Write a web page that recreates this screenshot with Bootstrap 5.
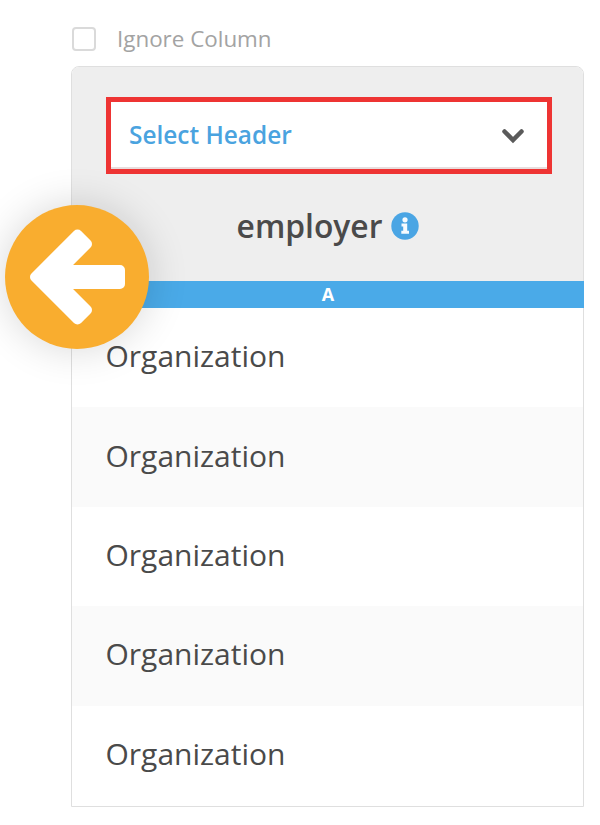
<!DOCTYPE html>
<html lang="en">
<head>
<meta charset="utf-8">
<title>Column mapping</title>
<link href="https://cdn.jsdelivr.net/npm/bootstrap@5.3.0/dist/css/bootstrap.min.css" rel="stylesheet">
<style>
html,body{height:825px;overflow:hidden;background:#fff}
body{font-family:"Open Sans","Liberation Sans",sans-serif;color:#4a4a4a;position:relative}
.page-wrap{padding:26px 16px 0 71px}
.ignore-row{height:26px;gap:21px;margin-bottom:14px;color:#a3a3a3;font-size:22.4px;line-height:26px;padding-left:1px}
.fake-check{width:24px;height:24px;border:2.5px solid #dadada;border-radius:4px;background:#fff;flex:none}
.map-card{border:1px solid #dfdfdf;border-radius:8px 8px 0 0;height:741px}
.map-head{background:#eee;height:214px;padding:30px 31px 0 34px;border-radius:7px 7px 0 0}
.sel-outline{border:5px solid #ee3433;height:77px;background:#fff;box-shadow:inset 0 -2px 0 #e8dddd;padding:0 22px 0 18px;color:#4aa3df;font-size:24.4px;font-weight:600}
.col-title{margin-top:31px;height:42px;gap:9px;font-size:31.8px;font-weight:600;line-height:42px;color:#4a4a4a;padding-right:2px}
.letter-bar{background:#4aaae8;color:#fff;height:27px;line-height:27px;font-size:18px;font-weight:700;text-align:center;margin-right:-1px}
.data-row{height:99.4px;padding-left:33.500px;padding-bottom:4px;font-size:30px;color:#4a4a4a}
.data-row:nth-child(even){background:#fafafa}
.back-circle{position:absolute;left:5px;top:205px;width:144px;height:144px;border-radius:50%;background:#f9ad2f;box-shadow:0 0 40px rgba(0,0,0,.16)}
</style>
</head>
<body>
<div class="page-wrap">
  <div class="ignore-row d-flex align-items-center">
    <span class="fake-check"></span>
    <span>Ignore Column</span>
  </div>
  <div class="map-card">
    <div class="map-head">
      <div class="sel-outline d-flex align-items-center justify-content-between">
        <span>Select Header</span>
        <svg width="24" height="16" viewBox="0 0 24 16"><path d="M3.500 3.500 12 12 20.500 3.500" fill="none" stroke="#5a5a5a" stroke-width="4.500" stroke-linecap="round" stroke-linejoin="miter"/></svg>
      </div>
      <div class="col-title d-flex justify-content-center align-items-center">
        <span>employer</span>
        <svg width="28" height="28" viewBox="0 0 28 28"><circle cx="14" cy="14" r="13.700" fill="#4aa5e4"/><circle cx="14" cy="7.800" r="2.600" fill="#fff" opacity=".95"/><path d="M10.500 11.500h5.700v7.300h1.800v3H10.300v-3h1.900v-4.300h-1.700z" fill="#fff" opacity=".95"/></svg>
      </div>
    </div>
    <div class="letter-bar">A</div>
    <div>
      <div class="data-row d-flex align-items-center">Organization</div>
      <div class="data-row d-flex align-items-center">Organization</div>
      <div class="data-row d-flex align-items-center">Organization</div>
      <div class="data-row d-flex align-items-center">Organization</div>
      <div class="data-row d-flex align-items-center">Organization</div>
    </div>
  </div>
</div>
<div class="back-circle">
  <svg width="144" height="144" viewBox="0 0 144 144"><path d="M30 72 72.500 29.500 82 39 56 65H115V79H56L82 105 72.500 114.500Z" fill="#fff" stroke="#fff" stroke-width="10" stroke-linejoin="round"/></svg>
</div>
</body>
</html>
